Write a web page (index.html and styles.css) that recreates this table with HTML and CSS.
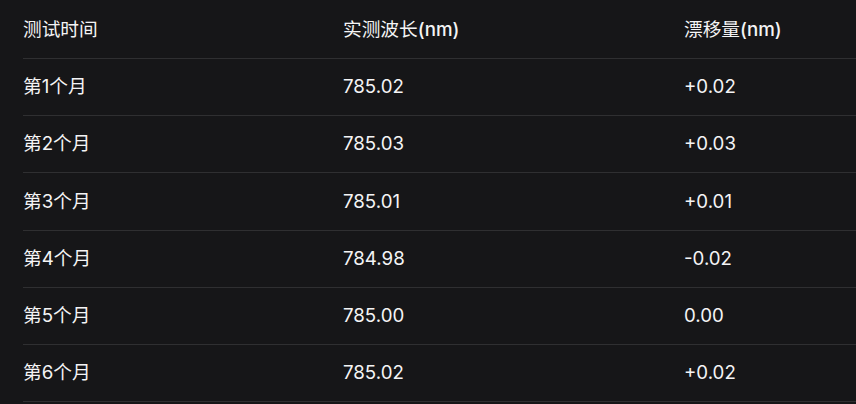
FILE: index.html
```html
<!DOCTYPE html>
<html lang="zh-CN">
<head>
<meta charset="utf-8">
<link rel="stylesheet" href="styles.css">
</head>
<body>
<div class="wrap">
  <table class="data">
    <thead>
      <tr><th class="c1"><span class="zh">测试时间</span></th><th class="c2"><span class="zh">实测波长</span>(nm)</th><th class="c3"><span class="zh">漂移量</span>(nm)</th></tr>
    </thead>
    <tbody>
      <tr><td>第1个月</td><td>785.02</td><td>+0.02</td></tr>
      <tr><td>第2个月</td><td>785.03</td><td>+0.03</td></tr>
      <tr><td>第3个月</td><td>785.01</td><td>+0.01</td></tr>
      <tr><td>第4个月</td><td>784.98</td><td>-0.02</td></tr>
      <tr><td>第5个月</td><td>785.00</td><td>0.00</td></tr>
      <tr><td>第6个月</td><td>785.02</td><td>+0.02</td></tr>
    </tbody>
  </table>
</div>
</body>
</html>
```

FILE: styles.css
```css
html, body {
  margin: 0;
  padding: 0;
  background: #161618;
}
body {
  font-family: Inter, "Noto Sans CJK SC", sans-serif;
  color: #f4f4f5;
  font-size: 18.7px;
  overflow: hidden;
}
.wrap {
  padding: 2px 0 0 23px;
  width: 833px;
  overflow: hidden;
}
.data {
  border-collapse: collapse;
  width: 900px;
  table-layout: fixed;
}
.data th, .data td {
  text-align: left;
  padding: 0;
  height: 56.17px;
  line-height: 26px;
  border-bottom: 1px solid #2f2f31;
  vertical-align: middle;
}
.data th {
  font-weight: 500;
}
.data th .zh {
  font-weight: 400;
}
.c1 { width: 320px; }
.c2 { width: 341px; }
.c3 { width: auto; }
```
